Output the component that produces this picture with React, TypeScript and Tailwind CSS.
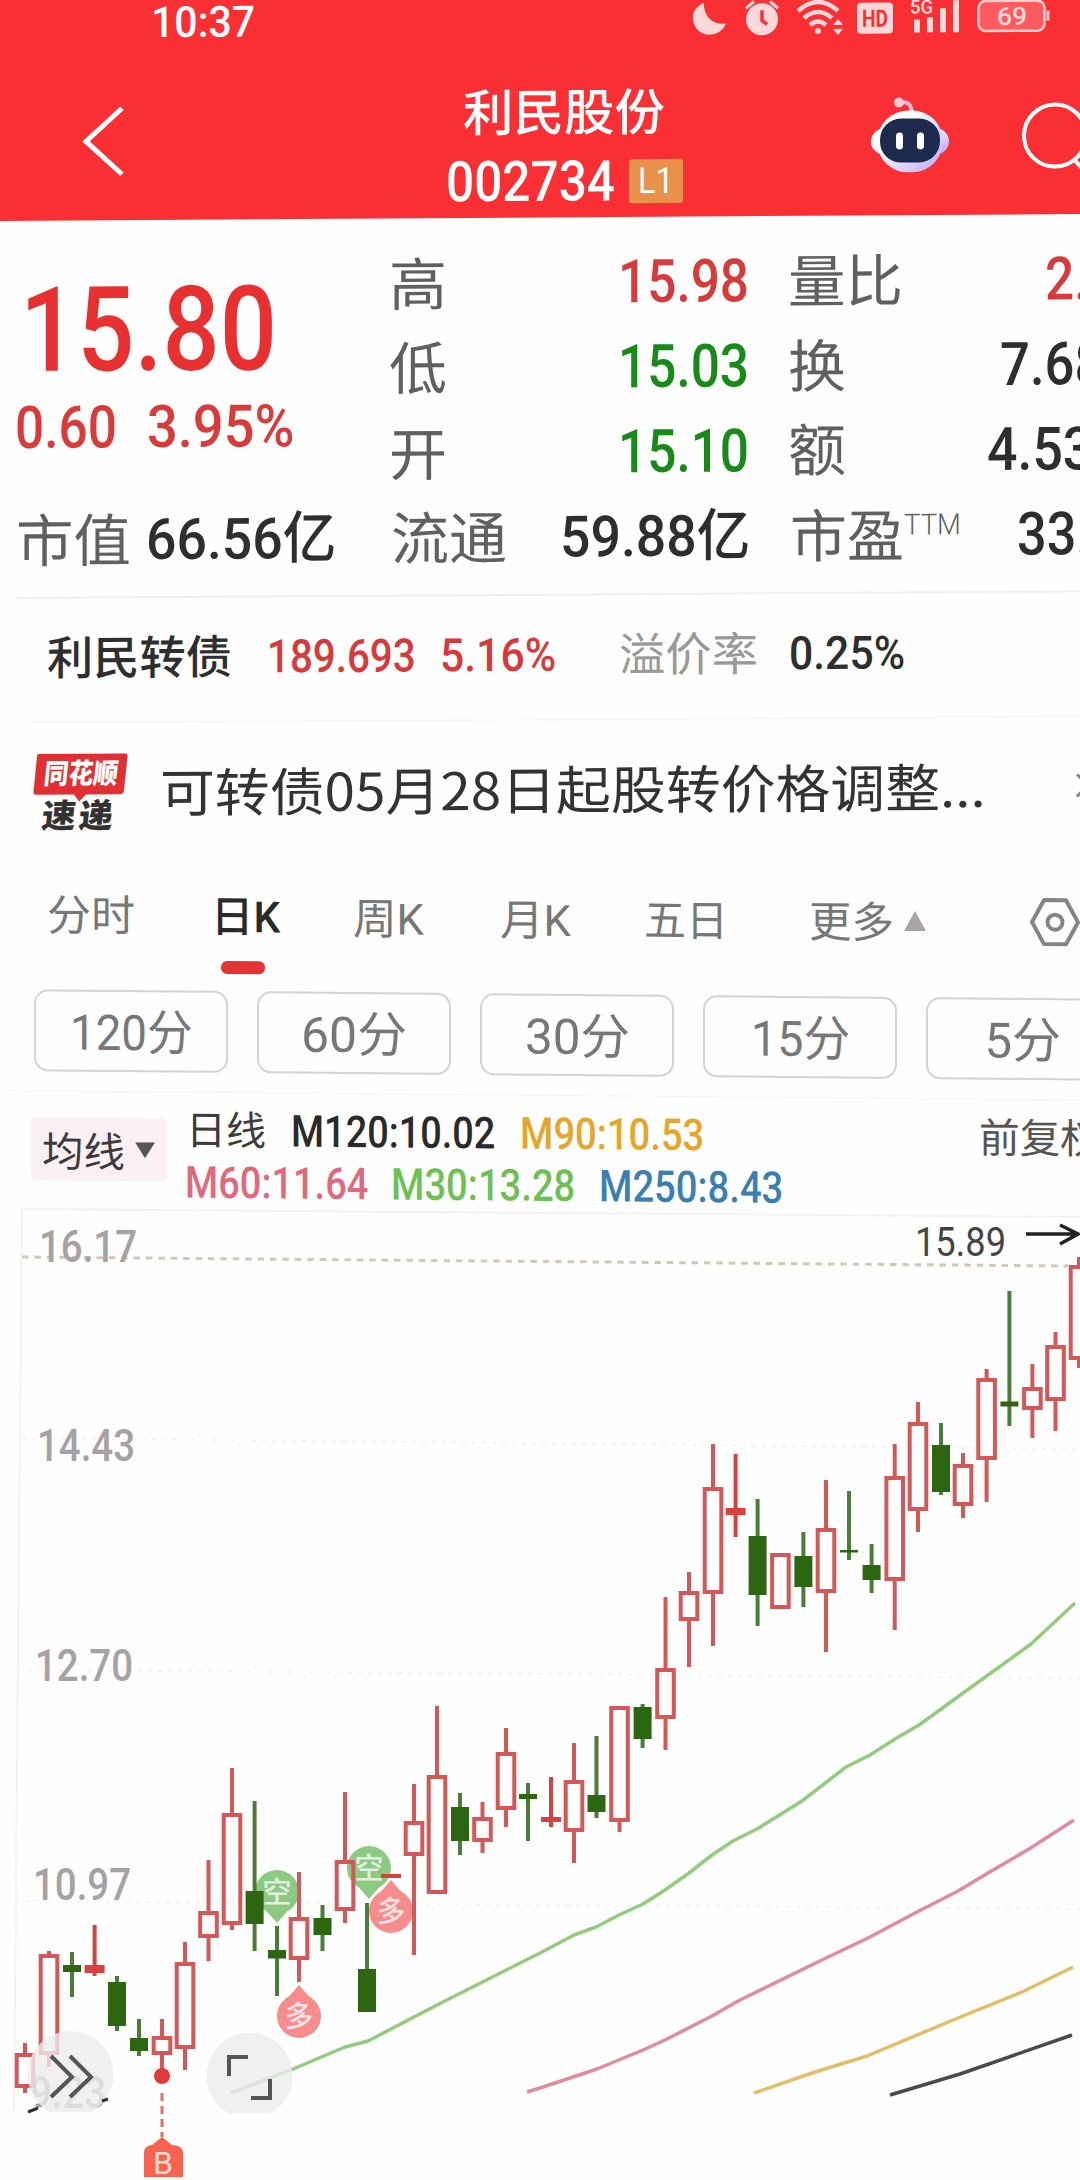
import React, { useLayoutEffect, useRef, useState } from 'react';

interface FitProps {
    className: string;
    children: React.ReactNode;
}

// Squeezes a line of text so that it fills the width of its box.
const Fit: React.FC<FitProps> = ({ className, children }) => {
    const boxRef = useRef<HTMLSpanElement>(null);
    const textRef = useRef<HTMLSpanElement>(null);
    const [scale, setScale] = useState(1);

    useLayoutEffect(() => {
        if (boxRef.current && textRef.current) {
            setScale(boxRef.current.clientWidth / textRef.current.offsetWidth);
        }
    }, [children]);

    return (
        <span ref={boxRef} className={`block shrink-0 leading-none whitespace-nowrap ${className}`}>
            <span ref={textRef} className="inline-block origin-left" style={{ transform: `scaleX(${scale})` }}>
                {children}
            </span>
        </span>
    );
};

const StatusIcons: React.FC = () => (
    <svg className="ml-[438px] h-9 w-[360px] shrink-0" viewBox="693 1 360 36" fill="#ffd9d9">
        <path d="M704 3 C696 6 692 13 693 20 C694 29 701 35 709 35 C717 35 723 31 726 24 C712 26 703 15 704 3Z" />
        <ellipse cx="762" cy="20" rx="16" ry="16" />
        <path d="M746 9 L754 2 M778 9 L770 2" stroke="#ffd9d9" strokeWidth="3" />
        <path d="M762 11 V21 L767 25" stroke="#f92f34" strokeWidth="3.5" fill="none" />
        <g fill="none" stroke="#ffd9d9" strokeWidth="4.500">
            <path d="M798 12 Q818 -6 838 12" />
            <path d="M804 19 Q818 7 832 19" />
            <path d="M810 26 Q818 19 826 26" />
        </g>
        <circle cx="818" cy="32" r="3" />
        <path d="M838 20 l5 6 h-10z M838 36 l5 -6 h-10z" />
        <rect x="857" y="4" width="36" height="31" rx="4" />
        <text x="862" y="28" fontSize="24" fontWeight="700" textLength="26" lengthAdjust="spacingAndGlyphs" fill="#f92f34">HD</text>
        <text x="910" y="15" fontSize="19" fontWeight="500" textLength="23" lengthAdjust="spacingAndGlyphs">5G</text>
        <path d="M914 21h6v13h-6z M927 19h6v15h-6z M940 10h6v24h-6z M953 2h6v32h-6z" />
        <rect x="978.500" y="3" width="66" height="30" rx="7" fill="#ff5a5e" stroke="#ffd0d0" strokeWidth="2.500" />
        <path d="M1048 13v10" stroke="#ffd0d0" strokeWidth="3" />
        <text x="997" y="27" fontSize="25" fontWeight="500" textLength="30" lengthAdjust="spacingAndGlyphs">69</text>
    </svg>
);

const RobotIcon: React.FC = () => (
    <svg className="ml-[187px] mb-1 h-[76px] w-[78px] shrink-0" viewBox="0 0 78 76">
        <defs>
            <linearGradient id="shell" x1="0" y1="0" x2="1" y2="1">
                <stop offset="0.300" stopColor="#ffffff" />
                <stop offset="1" stopColor="#b9a6f5" />
            </linearGradient>
        </defs>
        <path d="M30 6 Q40 4 41 16" stroke="#f3b6cf" strokeWidth="4" fill="none" />
        <circle cx="28" cy="6" r="5" fill="#ffc9d4" />
        <rect x="0" y="32" width="78" height="26" rx="13" fill="url(#shell)" />
        <rect x="6" y="14" width="66" height="62" rx="31" fill="url(#shell)" />
        <rect x="9" y="22" width="60" height="44" rx="21" fill="#1c2a4d" />
        <rect x="25" y="36" width="7" height="17" rx="3.500" fill="#ffffff" />
        <rect x="46" y="36" width="7" height="17" rx="3.500" fill="#ffffff" />
    </svg>
);

const Header: React.FC = () => (
    <header className="h-[221px] bg-[#f92f34] text-white [clip-path:polygon(0_0,100%_0,100%_214px,0_221px)]">
        <div className="origin-left -skew-y-[0.35deg]">
            <div className="flex h-[46px] items-center">
                <Fit className="ml-[151px] w-[104px] text-[43px] font-medium">10:37</Fit>
                <StatusIcons />
            </div>
            <div className="flex h-[175px] items-center pt-4">
                <svg className="ml-[82px] h-[70px] w-[43px] shrink-0" viewBox="0 0 43 70" fill="none" stroke="#ffffff" strokeWidth="5">
                    <path d="M40 2 L4 35 L40 68" />
                </svg>
                <div className="ml-[319px] flex w-[240px] shrink-0 flex-col pt-[18px]">
                    <div className="flex h-[68px] items-center justify-center">
                        <Fit className="mt-px w-[202px] text-[50px] font-medium">利民股份</Fit>
                    </div>
                    <div className="flex h-[68px] items-center">
                        <Fit className="ml-[2px] w-[169px] text-[56px] font-medium">002734</Fit>
                        <div className="ml-[14px] flex h-11 w-[54px] items-center justify-center rounded-[3px] bg-[#e8914b]">
                            <Fit className="w-[36px] text-[36px]">L1</Fit>
                        </div>
                    </div>
                </div>
                <RobotIcon />
                <svg className="ml-[72px] h-[68px] w-[68px] shrink-0" viewBox="0 0 68 68" fill="none" stroke="#ffffff" strokeWidth="4">
                    <circle cx="34" cy="34" r="31" />
                    <path d="M53 58 L63 69" />
                </svg>
            </div>
        </div>
    </header>
);

const Quote: React.FC = () => (
    <section className="origin-left -skew-y-[0.35deg]">
        <div className="flex pt-[22px] pb-[14px] text-[57px] text-[#606060]">
            <div className="w-[388px] shrink-0">
                <div className="mt-8 flex h-28 items-center">
                    <Fit className="ml-[20px] w-[257px] text-[118px] font-medium text-[#e93030]">15.80</Fit>
                </div>
                <div className="flex h-[81px] items-center text-[59px] text-[#d93b3b] font-medium">
                    <Fit className="ml-[15px] w-[102px]">0.60</Fit>
                    <Fit className="ml-[30px] w-[147px]">3.95%</Fit>
                </div>
                <div className="mt-[30px] flex h-[85px] items-center">
                    <Fit className="mt-1 ml-[16px] w-[115px]">市值</Fit>
                    <Fit className="ml-[15px] w-[190px] font-medium text-[#2e2e2e]">66.56亿</Fit>
                </div>
            </div>
            <div className="w-[362px] shrink-0">
                <div className="flex h-[85px] items-center justify-between">
                    <Fit className="mt-[5px] ml-px w-[58px]">高</Fit>
                    <Fit className="mr-px w-[131px] text-[60px] font-medium text-[#d63a3a]">15.98</Fit>
                </div>
                <div className="flex h-[85px] items-center justify-between">
                    <Fit className="mt-[3px] ml-px w-[58px]">低</Fit>
                    <Fit className="mr-px w-[131px] text-[60px] font-medium text-[#188a18]">15.03</Fit>
                </div>
                <div className="flex h-[85px] items-center justify-between">
                    <Fit className="mt-[5px] ml-px w-[58px]">开</Fit>
                    <Fit className="mr-px w-[131px] text-[60px] font-medium text-[#188a18]">15.10</Fit>
                </div>
                <div className="flex h-[85px] items-center">
                    <Fit className="mt-[3px] ml-[3px] w-[116px]">流通</Fit>
                    <Fit className="ml-[53px] w-[190px] font-medium text-[#2e2e2e]">59.88亿</Fit>
                </div>
            </div>
            <div className="ml-[38px] w-[400px] shrink-0">
                <div className="flex h-[85px] items-center">
                    <Fit className="mt-[4px] w-[115px]">量比</Fit>
                    <Fit className="ml-[142px] w-[102px] text-[60px] font-medium text-[#d63a3a]">2.06</Fit>
                </div>
                <div className="flex h-[85px] items-center">
                    <Fit className="mt-[3px] w-[58px]">换</Fit>
                    <Fit className="ml-[154px] w-[143px] text-[60px] font-medium text-[#2e2e2e]">7.68%</Fit>
                </div>
                <div className="flex h-[85px] items-center">
                    <Fit className="mt-[2px] w-[58px]">额</Fit>
                    <Fit className="ml-[141px] w-[160px] text-[60px] font-medium text-[#2e2e2e]">4.53亿</Fit>
                </div>
                <div className="flex h-[85px] items-center">
                    <Fit className="mt-[3px] ml-[2px] w-[114px]">市盈</Fit>
                    <Fit className="mb-5 w-[57px] text-[29px] font-light">TTM</Fit>
                    <Fit className="ml-[56px] w-[133px] text-[60px] font-medium text-[#2e2e2e]">33.61</Fit>
                </div>
            </div>
        </div>
        <div className="ml-4 h-[2px] bg-[#f0f0f0]" />
        <div className="flex h-[123px] items-center pb-[6px] text-[46px] text-[#2e2e2e]">
            <Fit className="mt-[3px] ml-[47px] w-[185px] font-medium">利民转债</Fit>
            <Fit className="ml-[35px] w-[149px] font-medium text-[#d63a3a]">189.693</Fit>
            <Fit className="ml-[24px] w-[116px] font-medium text-[#d63a3a]">5.16%</Fit>
            <Fit className="mt-[3px] ml-[63px] w-[139px] text-[#999999]">溢价率</Fit>
            <Fit className="ml-[31px] w-[116px] font-medium">0.25%</Fit>
        </div>
        <div className="ml-8 h-[2px] bg-[#f7f7f7]" />
        <div className="flex h-[140px] items-center text-[#333333]">
            <div className="ml-[33px] flex w-[96px] shrink-0 flex-col">
                <div className="relative flex h-[41px] items-center justify-center">
                    <svg className="absolute top-0 left-0 h-[48px] w-[96px]" viewBox="0 0 96 48" fill="#e13033">
                        <path d="M7 0 H92 Q95 0 94.500 3 L91 37 Q90.500 41 87 41 H53 L46 48 L41 41 H3 Q0 41 0.500 38 L4 3 Q4 0 7 0Z" />
                    </svg>
                    <Fit className="relative -skew-x-6 w-[74px] text-[28px] font-black text-white">同花顺</Fit>
                </div>
                <div className="mt-[4px] ml-[9px] flex h-[35px] items-center">
                    <Fit className="-skew-x-6 w-[34px] text-[33px] font-black">速</Fit>
                    <Fit className="ml-[3px] -skew-x-6 w-[34px] text-[33px] font-black">递</Fit>
                </div>
            </div>
            <Fit className="mb-[6px] ml-[31px] w-[826px] text-[52px] font-['Noto_Sans_CJK_SC',sans-serif]">可转债05月28日起股转价格调整...</Fit>
            <svg className="mb-1 ml-[90px] h-6 w-6 shrink-0" viewBox="0 0 24 24" stroke="#888888" strokeWidth="3">
                <path d="M1 1 L23 23 M23 1 L1 23" />
            </svg>
        </div>
    </section>
);

const Periods: React.FC = () => (
    <section className="origin-left skew-y-[0.5deg]">
        <div className="flex h-[95px] items-center pt-[6px] text-[43px] text-[#777777]">
            <Fit className="mt-[2px] ml-[47px] w-[88px]">分时</Fit>
            <Fit className="mt-[2px] ml-[76px] w-[69px] font-medium text-[#2a2a2a]">日K</Fit>
            <Fit className="mt-[3px] ml-[73px] w-[71px]">周K</Fit>
            <Fit className="mt-[3px] ml-[76px] w-[71px]">月K</Fit>
            <Fit className="mt-[2px] ml-[73px] w-[84px]">五日</Fit>
            <Fit className="mt-[2px] ml-[81px] w-[85px]">更多</Fit>
            <svg className="mb-[4px] ml-[10px] h-5 w-[22px] shrink-0" viewBox="0 0 22 20" fill="#a9a4a9">
                <path d="M11 0 L22 20 H0Z" />
            </svg>
            <svg className="mb-[4px] ml-[104px] h-[50px] w-[50px] shrink-0" viewBox="0 0 50 50" fill="none" stroke="#858585" strokeWidth="4">
                <path d="M14 3 H36 L48 25 L36 47 H14 L2 25Z" strokeLinejoin="round" />
                <circle cx="25" cy="25" r="7.500" />
            </svg>
        </div>
        <div className="ml-[221px] h-[13px] w-11 rounded-[6px] bg-[#e43333]" />
        <div className="mt-[17px] ml-[34px] flex gap-[29px] text-[49px] text-[#777777]">
            <div className="flex h-[82px] w-[194px] shrink-0 items-center justify-center rounded-[14px] border-2 border-[#d6d3d6] pt-[5px]">
                <Fit className="w-[123px]">120分</Fit>
            </div>
            <div className="flex h-[82px] w-[194px] shrink-0 items-center justify-center rounded-[14px] border-2 border-[#d6d3d6] pt-[5px]">
                <Fit className="w-[106px]">60分</Fit>
            </div>
            <div className="flex h-[82px] w-[194px] shrink-0 items-center justify-center rounded-[14px] border-2 border-[#d6d3d6] pt-[5px]">
                <Fit className="w-[105px]">30分</Fit>
            </div>
            <div className="flex h-[82px] w-[194px] shrink-0 items-center justify-center rounded-[14px] border-2 border-[#d6d3d6] pt-[5px]">
                <Fit className="w-[99px]">15分</Fit>
            </div>
            <div className="flex h-[82px] w-[194px] shrink-0 items-center justify-center rounded-[14px] border-2 border-[#d6d3d6] pt-[5px]">
                <Fit className="w-[77px]">5分</Fit>
            </div>
        </div>
        <div className="mt-[19px] ml-2 h-px bg-[#f6f4f6]" />
        <div className="flex h-[113px] items-start">
            <div className="mt-[26px] ml-[31px] flex h-[63px] w-[136px] shrink-0 items-center rounded-[5px] bg-[#fdf0f4] text-[#3c3c3c]">
                <Fit className="ml-[11px] mt-[7px] w-[83px] text-[41px]">均线</Fit>
                <svg className="ml-[10px] h-4 w-5" viewBox="0 0 20 16" fill="#555555">
                    <path d="M0 0 H20 L10 16Z" />
                </svg>
            </div>
            <div className="mt-[12px] ml-[17px] w-[640px] shrink-0 text-[44px] font-medium">
                <div className="flex h-[51px] items-center">
                    <Fit className="mt-[2px] ml-[2px] w-[80px] text-[40px] font-normal text-[#3c3c3c]">日线</Fit>
                    <Fit className="ml-[25px] w-[204px] text-[#2a2a2a]">M120:10.02</Fit>
                    <Fit className="ml-[25px] w-[184px] text-[#e5a62a]">M90:10.53</Fit>
                </div>
                <div className="mt-px flex h-[51px] items-center">
                    <Fit className="ml-px w-[183px] text-[#e0697e]">M60:11.64</Fit>
                    <Fit className="ml-[23px] w-[184px] text-[#6fc052]">M30:13.28</Fit>
                    <Fit className="ml-[24px] w-[184px] text-[#3a7fb0]">M250:8.43</Fit>
                </div>
            </div>
            <div className="mt-[13px] ml-[155px] flex h-[51px] items-center">
                <Fit className="mt-px w-[122px] text-[41px] text-[#555555]">前复权</Fit>
            </div>
        </div>
    </section>
);

type Candle = [x: number, high: number, top: number, bottom: number, low: number, up: 0 | 1];

const CANDLES: Candle[] = [
    [25, 2043, 2053, 2088, 2093, 1], [49, 1951, 1954, 2055, 2067, 1], [72, 1952, 1965, 1972, 1997, 0],
    [94.6, 1925, 1965, 1973, 1976, 1], [117, 1976, 1982, 2026, 2031, 0], [139, 2019, 2038, 2051, 2056, 0],
    [162, 2019, 2036, 2055, 2076, 1], [185, 1942, 1962, 2049, 2070, 1], [208.5, 1860, 1911, 1938, 1961, 1],
    [232, 1768, 1813, 1925, 1930, 1], [254.6, 1801, 1891, 1924, 1951, 0], [277, 1926, 1950, 1958.5, 1996, 0],
    [299, 1872, 1917, 1960, 1982, 1], [322.5, 1905, 1918, 1935, 1951, 0], [345, 1792, 1860, 1911, 1923, 1],
    [367, 1903, 1969, 2012, 2012, 0], [391, 1874, 1874, 1878, 1878, 1], [414, 1784, 1821, 1856, 1955, 1],
    [437, 1706, 1775, 1894, 1894, 1], [460, 1793, 1807, 1841, 1855, 0], [482.5, 1802, 1817, 1842, 1853, 1],
    [506, 1728, 1752, 1810, 1827, 1], [528, 1783, 1794, 1799, 1841, 0], [551, 1777, 1817, 1822, 1827, 1],
    [574, 1743, 1780, 1832, 1863, 1], [596.5, 1736, 1795, 1812, 1818, 0], [619.5, 1706, 1706, 1822, 1832, 1],
    [642.6, 1704, 1707, 1739, 1748, 0], [665.5, 1597, 1668, 1719, 1750, 1], [689, 1572, 1591, 1621, 1667, 1],
    [713, 1444, 1487, 1594, 1646, 1], [735.6, 1454, 1508, 1515, 1537, 1], [757.6, 1499, 1536, 1595, 1626, 0],
    [780.4, 1553, 1553, 1609, 1609, 1], [803.4, 1532, 1556, 1587, 1607, 0], [826, 1480, 1528, 1593, 1652, 1],
    [849, 1491, 1550, 1552.5, 1560, 0], [871.6, 1544, 1565, 1580, 1593, 0], [894.7, 1444, 1476, 1581, 1630, 1],
    [918, 1402, 1422, 1511, 1532, 1], [941, 1423, 1445, 1492, 1495, 0], [963, 1453, 1464, 1506, 1518, 1],
    [986.6, 1369, 1378, 1460, 1502, 1], [1009.4, 1291, 1401.5, 1406.5, 1426, 0], [1032.4, 1364, 1387, 1410, 1438, 1],
    [1055.5, 1332, 1345, 1401, 1431, 1], [1079, 1257, 1265, 1360, 1368, 1],
];

const AVERAGES = [
    { color: '#93cc7e', points: '231,2093 293,2069 345,2047 368,2041 437,2005 540,1953 574,1935 596,1927 619,1915 643,1904 665,1890 689,1873 712,1855 733,1841 757,1829 802,1801 846,1767 870,1755 895,1739 919,1725 977,1683 1031,1644 1075,1603' },
    { color: '#df8c9d', points: '527,2092 540,2088 597,2069 643,2050 667,2039 712,2016 738,2001 826,1958 870,1937 915,1913 958,1891 988,1873 1029,1849 1074,1820' },
    { color: '#e4be66', points: '754,2093 815,2072 867,2056 953,2020 1022,1992 1073,1967' },
    { color: '#4a4a4a', points: '890,2095 960,2074 1072,2035' },
];

const AXIS = [
    { label: '16.17', x: 39, y: 1262, w: 98 },
    { label: '14.43', x: 37, y: 1461, w: 98 },
    { label: '12.70', x: 35, y: 1681, w: 98 },
    { label: '10.97', x: 33, y: 1900, w: 98 },
    { label: '9.23', x: 30, y: 2108, w: 76 },
];

const CandleShape: React.FC<{ candle: Candle }> = ({ candle: [x, high, top, bottom, low, up] }) => {
    if (!up) {
        return (
            <g fill="#2d6610">
                <rect x={x - 2} y={high} width={4} height={low - high} fill="#4c7d38" />
                <rect x={x - 9} y={top} width={18} height={bottom - top} />
            </g>
        );
    }
    if (bottom - top < 10) {
        return (
            <g fill="#d94040">
                <rect x={x - 2} y={high} width={4} height={low - high} />
                <rect x={x - 10} y={top} width={20} height={bottom - top} />
            </g>
        );
    }
    return (
        <g stroke="#d45858" strokeWidth="4" fill="none">
            <path d={`M${x} ${high} V${top} M${x} ${bottom} V${low}`} />
            <rect x={x - 8.3} y={top + 2} width={16.6} height={bottom - top - 4} />
        </g>
    );
};

const Pin: React.FC<{ x: number; y: number; down?: boolean; label: string }> = ({ x, y, down, label }) => (
    <g fill={down ? '#8cc981' : '#f68c8c'}>
        <circle cx={x} cy={y} r="22" />
        <path d={down ? `M${x - 13} ${y + 16} L${x} ${y + 31} L${x + 13} ${y + 16}Z` : `M${x - 13} ${y - 16} L${x} ${y - 31} L${x + 13} ${y - 16}Z`} />
        <text x={x} y={y + 11} fontSize="29" fontWeight="500" textAnchor="middle" fill="#ffffff" opacity="0.75">{label}</text>
    </g>
);

const Chart: React.FC = () => (
    <svg className="block h-[976px] w-[1080px]" viewBox="0 1204 1080 976">
        <path d="M22 1209 L1080 1217 M22 1209 L14 2110" stroke="#f5f2f5" strokeWidth="2" fill="none" />
        <path d="M22 1438 L1080 1449 M18 1670 L1080 1678 M16 1901 L1080 1909" stroke="#f5f3f5" strokeWidth="2" strokeDasharray="4 6" />
        <path d="M22 1257 L1068 1266" stroke="#d3c8b4" strokeWidth="3" strokeDasharray="6.500 5.900" />

        {AXIS.map(({ label, x, y, w }) => (
            <text key={label} x={x} y={y} fontSize="45" fontWeight="500" fill="#a5a1a5" textLength={w} lengthAdjust="spacingAndGlyphs">{label}</text>
        ))}
        <text x="915" y="1256" fontSize="40" fill="#444444" textLength="91" lengthAdjust="spacingAndGlyphs">15.89</text>
        <path d="M1026 1234 H1077 M1060 1225 L1078 1234 L1060 1244" stroke="#222222" strokeWidth="3.500" fill="none" />

        <Pin x={277} y={1892} down label="空" />
        <Pin x={369} y={1868} down label="空" />
        <Pin x={299} y={2016} label="多" />
        <Pin x={391} y={1911} label="多" />

        {AVERAGES.map(({ color, points }) => (
            <polyline key={color} points={points} fill="none" stroke={color} strokeWidth="3.500" strokeLinejoin="round" />
        ))}
        {CANDLES.map((candle) => (
            <CandleShape key={candle[0]} candle={candle} />
        ))}

        <circle cx="162" cy="2076" r="8" fill="#e0393c" />
        <path d="M162 2093 V2137" stroke="#e07468" strokeWidth="3" strokeDasharray="8 5" />
        <path d="M162 2137 L172 2145 Q183 2146 183 2152 V2177 H144 V2152 Q144 2146 152 2145Z" fill="#f8634f" />
        <text x="163" y="2174" fontSize="32" textAnchor="middle" fill="#ffdcd8">B</text>

        {/* floating chart buttons */}
        <path d="M50 2112 A43 43 0 1 1 91 2112Z" fill="#ececec" fillOpacity="0.8" />
        <path d="M228 2113 A43 43 0 1 1 271 2113Z" fill="#ececec" fillOpacity="0.8" />
        <g fill="none" stroke="#555555" strokeWidth="4">
            <path d="M51 2056 L72 2077 L51 2097 M70 2056 L91 2077 L70 2097" />
            <path d="M229 2076 V2057 H248 M270 2079 V2098 H251" />
            <path d="M28 2112 L38 2108 M102 2101 L108 2099" stroke="#333333" strokeWidth="3" />
        </g>
    </svg>
);

const App: React.FC = () => (
    <div className="h-[2180px] w-[1080px] overflow-hidden bg-[#fefefe] font-[Roboto,'Noto_Sans_CJK_SC',sans-serif]">
        <Header />
        <Quote />
        <Periods />
        <Chart />
    </div>
);

export default App;
